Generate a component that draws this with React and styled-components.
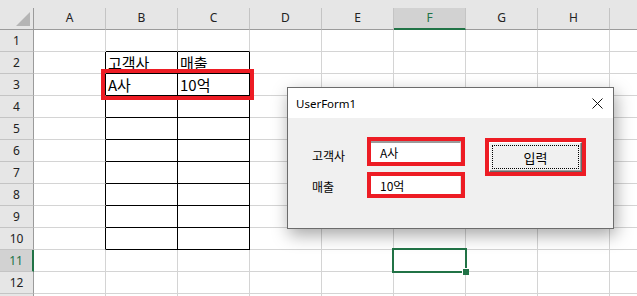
import React from 'react'
import styled, { createGlobalStyle } from 'styled-components'

const GlobalStyle = createGlobalStyle`
  html, body { margin:0; padding:0; background:#fff; }
  body { font-family: "Noto Sans", "Noto Sans CJK KR", sans-serif; }
  * { box-sizing: border-box; }
`

const COLS = ['A', 'B', 'C', 'D', 'E', 'F', 'G', 'H', 'I']
const ROW_COUNT = 13
const TABLE_COLS = ['B', 'C']

// cell contents of the sheet
const cells = { B2: '고객사', C2: '매출', B3: 'A사', C3: '10억' }

const GRID = '#d4d4d4'
const INK = '#000'
const GREEN = '#217346'
const RED = '#ed1c24'

function App() {
  return (
    <>
      <GlobalStyle />
      <Sheet>
        <TopStrip />
        <Grid>
          <Corner>
            <svg width="34" height="22" viewBox="0 0 34 22">
              <polygon points="16,18 30,4 30,18" fill="#b5b5b5" />
            </svg>
          </Corner>
          {COLS.map((c) => (
            <ColHead key={c} $active={c === 'F'}>{c !== 'I' && c}</ColHead>
          ))}
          {Array.from({ length: ROW_COUNT }, (_, i) => i + 1).map((r) => (
            <React.Fragment key={r}>
              <RowHead $active={r === 11}>{r < ROW_COUNT && r}</RowHead>
              {COLS.map((c) => {
                const inTable = TABLE_COLS.includes(c) && r >= 2 && r <= 10
                const bottomInk = TABLE_COLS.includes(c) && r >= 1 && r <= 10
                const rightInk = (inTable || c === 'A') && r >= 2 && r <= 10
                return (
                  <Cell
                    key={c + r}
                    $bottom={bottomInk ? INK : GRID}
                    $right={rightInk ? INK : GRID}
                  >
                    {cells[c + r]}
                  </Cell>
                )
              })}
            </React.Fragment>
          ))}
        </Grid>

        <RowMark />
        <Selection>
          <Handle />
        </Selection>

        <Dialog>
          <TitleBar>
            <Title>UserForm1</Title>
            <svg width="11" height="11" viewBox="0 0 11 11">
              <path d="M0.5 0.5 L10.5 10.5 M10.5 0.5 L0.5 10.5" stroke="#111" strokeWidth="1" />
            </svg>
          </TitleBar>
          <FormBody>
            <FieldLabel $top={11}>고객사</FieldLabel>
            <RedFrame>
              <TextBox $sunken>A사</TextBox>
            </RedFrame>
            <ButtonSlot>
              <RedFrame $height={38}>
                <FormButton>
                  <FocusRect>입력</FocusRect>
                </FormButton>
              </RedFrame>
            </ButtonSlot>
            <FieldLabel $top={7}>매출</FieldLabel>
            <RedFrame>
              <TextBox>10억</TextBox>
            </RedFrame>
          </FormBody>
        </Dialog>
      </Sheet>
    </>
  )
}

export default App

const Sheet = styled.div`
  position: relative;
  width: 637px;
  height: 296px;
  overflow: hidden;
  background: #fff;
`

const TopStrip = styled.div`
  height: 8px;
  background: #e6e6e6;
`

const Grid = styled.div`
  display: grid;
  grid-template-columns: 34px repeat(9, 72px);
  grid-auto-rows: 22px;
`

const Corner = styled.div`
  background: #e6e6e6;
  border-right: 1px solid #9b9b9b;
  border-bottom: 1px solid #9b9b9b;
  svg { display: block; }
`

const ColHead = styled.div`
  display: flex;
  align-items: center;
  justify-content: center;
  padding-bottom: 2px;
  background: ${(p) => (p.$active ? '#d2d2d2' : '#e6e6e6')};
  border-right: 1px solid #c4c4c4;
  border-bottom: ${(p) => (p.$active ? `2px solid ${GREEN}` : '1px solid #9b9b9b')};
  color: ${(p) => (p.$active ? GREEN : '#222')};
  font-family: "Noto Sans", sans-serif;
  font-size: 12px;
`

const RowHead = styled.div`
  display: flex;
  align-items: center;
  justify-content: center;
  background: ${(p) => (p.$active ? '#d2d2d2' : '#e6e6e6')};
  border-right: ${(p) => (p.$active ? `2px solid ${GREEN}` : '1px solid #9b9b9b')};
  border-bottom: 1px solid #c4c4c4;
  color: ${(p) => (p.$active ? GREEN : '#222')};
  font-family: "Noto Sans", sans-serif;
  font-size: 12px;
`

const Cell = styled.div`
  display: flex;
  align-items: center;
  padding: 0 0 1px 2px;
  border-right: 1px solid ${(p) => p.$right};
  border-bottom: 1px solid ${(p) => p.$bottom};
  font-family: "Noto Sans CJK KR", "Noto Sans", sans-serif;
  font-size: 15px;
  color: #000;
  white-space: nowrap;
`

// annotation frame around B3:C3
const RowMark = styled.div`
  position: absolute;
  left: 101px;
  top: 69px;
  width: 153px;
  height: 31px;
  border: 4px solid ${RED};
`

const Selection = styled.div`
  position: absolute;
  left: 392px;
  top: 248px;
  width: 75px;
  height: 25px;
  border: 2px solid ${GREEN};
`

const Handle = styled.div`
  position: absolute;
  right: -4px;
  bottom: -4px;
  width: 7px;
  height: 7px;
  background: ${GREEN};
  border-left: 1px solid #fff;
  border-top: 1px solid #fff;
`

const Dialog = styled.div`
  position: absolute;
  left: 287px;
  top: 87px;
  width: 327px;
  height: 142px;
  display: flex;
  flex-direction: column;
  border: 1px solid #6c6c6c;
  background: #f0f0f0;
  box-shadow: 2px 6px 16px rgba(0, 0, 0, 0.35);
`

const TitleBar = styled.div`
  height: 30px;
  display: flex;
  align-items: center;
  justify-content: space-between;
  padding: 0 10px 0 8px;
  background: #fff;
  svg { display: block; }
`

const Title = styled.span`
  font-family: "Noto Sans", sans-serif;
  font-size: 11.5px;
  color: #000;
`

const FormBody = styled.div`
  flex: 1;
  display: grid;
  grid-template-columns: 55px 98px 101px;
  grid-template-rows: 29px 26px;
  row-gap: 6px;
  padding: 19px 0 0 24px;
`

const FieldLabel = styled.div`
  padding-top: ${(p) => p.$top}px;
  font-family: "Noto Sans CJK KR", sans-serif;
  font-size: 12px;
  line-height: 16px;
  color: #000;
`

const RedFrame = styled.div`
  display: flex;
  height: ${(p) => (p.$height ? `${p.$height}px` : '100%')};
  border: 4px solid ${RED};
`

const TextBox = styled.div`
  flex: 1;
  display: flex;
  align-items: center;
  padding-left: 9px;
  background: #fff;
  border-top: ${(p) => (p.$sunken ? '2px solid #9a9a9a' : 'none')};
  border-right: 1px solid #e3e3e3;
  font-family: "Noto Sans CJK KR", sans-serif;
  font-size: 12px;
  color: #000;
`

const ButtonSlot = styled.div`
  grid-row: 1 / span 2;
  grid-column: 3;
  width: 101px;
  margin: 1px 0 0 20px;
`

const FormButton = styled.button`
  flex: 1;
  display: flex;
  padding: 2px;
  margin: 0;
  background: #f0f0f0;
  border: 1px solid;
  border-color: #fff #696969 #696969 #fff;
  box-shadow: inset -1px -1px #a0a0a0;
`

const FocusRect = styled.span`
  flex: 1;
  display: flex;
  align-items: center;
  justify-content: center;
  border: 1px dotted #000;
  font-family: "Noto Sans CJK KR", sans-serif;
  font-size: 13px;
  color: #000;
`
